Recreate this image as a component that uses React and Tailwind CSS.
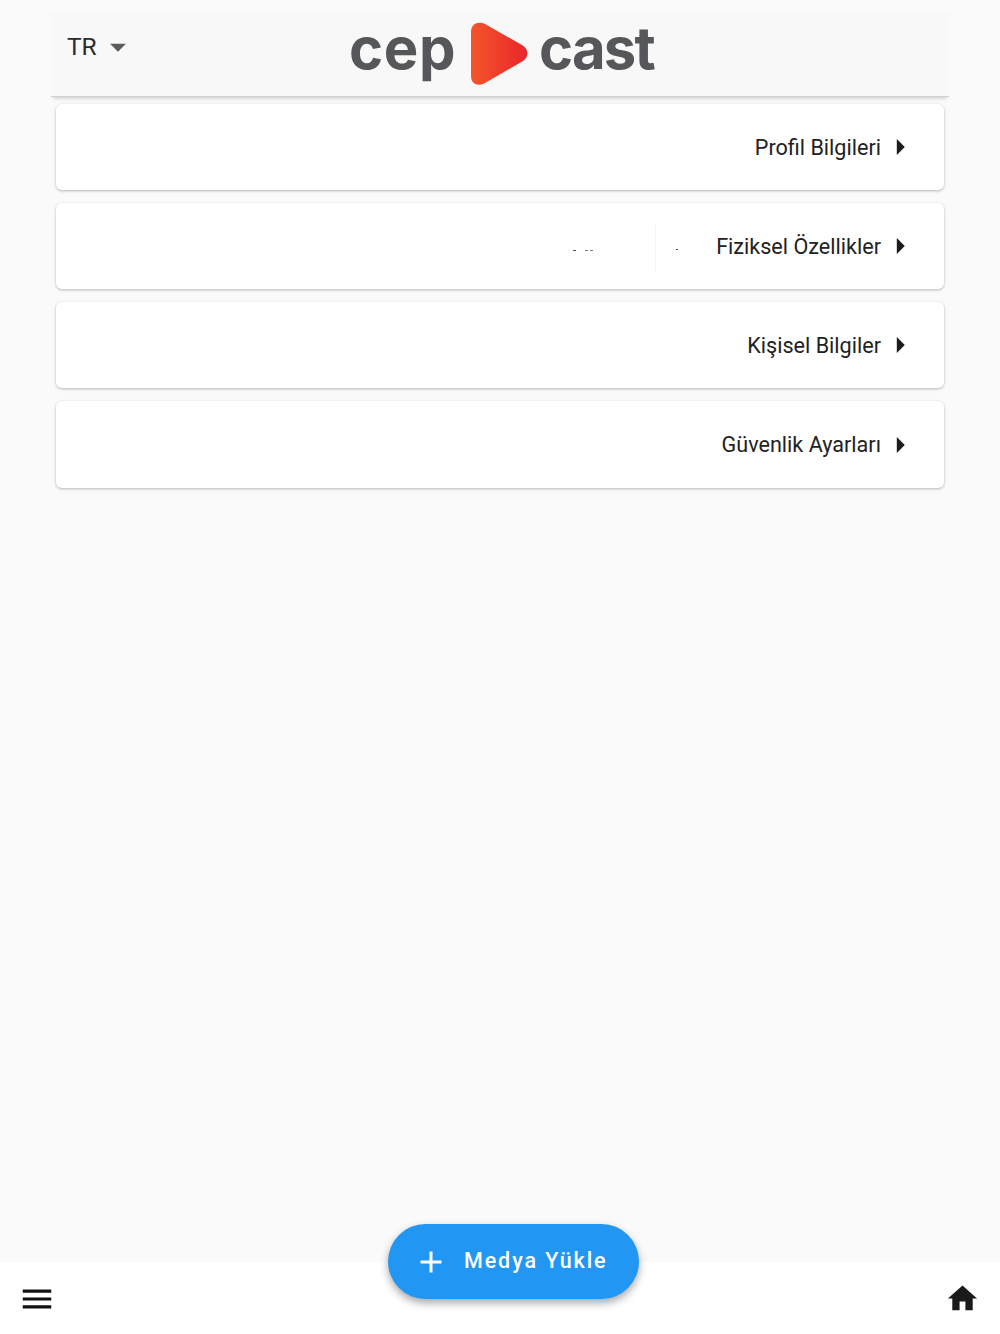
const FONT = "font-['Roboto',sans-serif]";

const items = ["Profil Bilgileri", "Fiziksel Özellikler", "Kişisel Bilgiler", "Güvenlik Ayarları"];

const CaretRight = () => (
  <svg viewBox="0 0 24 24" className="w-[38px] h-[38px] shrink-0" fill="#1c1c1c">
    <path d="M10 17l5-5-5-5v10z" />
  </svg>
);

const Logo = () => (
  <div className="flex items-center pl-[4px] text-[#55575a] font-['Inter',sans-serif] font-bold text-[58px] leading-none">
    <span className="tracking-[0.6px] w-[108px] mb-[12px]">cep</span>
    <svg viewBox="0 0 58 64" className="w-[58px] h-[64px] ml-[13px] mr-[11px]">
      <defs>
        <linearGradient id="play" x1="0" x2="1" y1="0" y2="0">
          <stop offset="0" stopColor="#f4552c" />
          <stop offset="1" stopColor="#e9262a" />
        </linearGradient>
      </defs>
      <path
        d="M1 10C1 2 8-1 15 2L52 23C59 27 59 35 53 39L15 61C8 65 1 62 1 54Z"
        fill="url(#play)"
      />
    </svg>
    <span className="tracking-[-1.8px] w-[116px] mb-[12px]">cast</span>
  </div>
);

const App = () => {
  return (
    <div className={`${FONT} flex flex-col min-h-[1334px] bg-[#fafafa]`}>
      <header className="relative mx-[51px] mt-[12px] h-[85px] flex items-center justify-center bg-[#f7f8f7] border-b border-[#cfcfcf] shadow-[0_4px_3px_-2px_rgba(0,0,0,0.14)]">
        <div className="absolute left-[16px] top-[16px] flex items-center text-[24.5px] text-[#2a2a2a]">
          <span>TR</span>
          <svg viewBox="0 0 24 24" className="w-[38px] h-[38px] ml-[2px]" fill="#5c5c5c">
            <path d="M7 10l5 5 5-5z" />
          </svg>
        </div>
        <Logo />
      </header>

      <main className="flex-1 flex flex-col gap-[13px] px-[56px] pt-[7px]">
        {items.map((item) => (
          <div
            key={item}
            className="relative h-[86px] last:h-[87px] flex items-center justify-end pr-[25px] bg-white rounded-[6px] shadow-[0_1px_3px_rgba(0,0,0,0.28)] text-[21.6px] text-[#222222]"
          >
            {item === "Fiziksel Özellikler" && (
              <>
                <div className="absolute left-[599px] top-[20px] h-[50px] border-l border-[#f5f5f5]" />
                <div className="absolute left-[517px] top-[47px] w-[3px] h-px bg-[#555555]" />
                <div className="absolute left-[529px] top-[47px] w-[3px] h-px bg-[#777777]" />
                <div className="absolute left-[534px] top-[47px] w-[3px] h-px bg-[#777777]" />
                <div className="absolute left-[620px] top-[46px] w-[2px] h-px bg-[#555555]" />
              </>
            )}
            <span className="mt-[2px]">{item}</span>
            <CaretRight />
          </div>
        ))}
      </main>

      <footer className="relative h-[72px] bg-white flex items-center justify-between pl-[18px] pr-[20px] pt-[1px]">
        <svg viewBox="0 0 24 24" className="w-[38px] h-[38px]" fill="#111111">
          <path d="M3 18h18v-2H3v2zm0-5h18v-2H3v2zm0-7v2h18V6H3z" />
        </svg>
        <svg viewBox="0 0 24 24" className="w-[35px] h-[35px]" fill="#1a1a1a">
          <path d="M10 20v-6h4v6h5v-8h3L12 3 2 12h3v8z" />
        </svg>
        <button className="absolute left-[388px] top-[-38px] w-[251px] h-[75px] flex items-center pl-[25px] rounded-full bg-[#2196f3] text-white text-[21.5px] font-medium tracking-[1.9px] shadow-[0_4px_8px_rgba(0,0,0,0.35)]">
          <svg viewBox="0 0 24 24" className="w-[36px] h-[36px] mr-[15px]" fill="none" stroke="#ffffff" strokeWidth="2">
            <path d="M12 5v14M5 12h14" />
          </svg>
          Medya Yükle
        </button>
      </footer>
    </div>
  );
};

export default App;
